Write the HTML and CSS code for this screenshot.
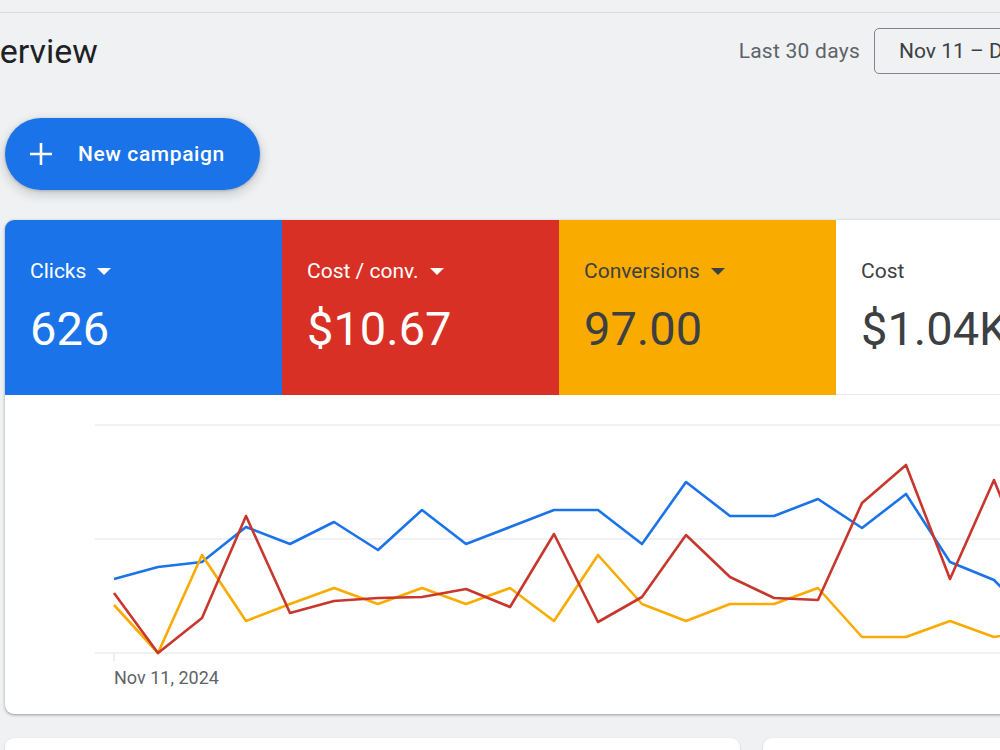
FILE: index.html
```html
<!DOCTYPE html>
<html lang="en">
<head>
<meta charset="UTF-8">
<meta name="viewport" content="width=device-width, initial-scale=1.0">
<title>Overview</title>
<link rel="stylesheet" href="styles.css">
</head>
<body>

<div class="topbar"></div>

<main class="page">
    <header class="page-head">
        <h1 class="title">Overview</h1>
        <div class="range">
            <span class="range-label">Last 30 days</span>
            <button class="date-btn">Nov 11 – Dec 10, 2024</button>
        </div>
    </header>

    <button class="new-btn">
        <svg class="plus" width="24" height="24" viewBox="0 0 24 24">
            <path d="M12 1v22M1 12h22" stroke="#fff" stroke-width="2.6" fill="none"/>
        </svg>
        New campaign
    </button>

    <section class="card">
        <div class="tiles">
            <div class="tile tile-blue">
                <div class="tile-label">Clicks <span class="caret"></span></div>
                <div class="tile-value">626</div>
            </div>
            <div class="tile tile-red">
                <div class="tile-label">Cost / conv. <span class="caret"></span></div>
                <div class="tile-value">$10.67</div>
            </div>
            <div class="tile tile-yellow">
                <div class="tile-label">Conversions <span class="caret"></span></div>
                <div class="tile-value">97.00</div>
            </div>
            <div class="tile tile-white">
                <div class="tile-label">Cost</div>
                <div class="tile-value">$1.04K</div>
            </div>
            <div class="tile-white tile-rest"></div>
        </div>

        <div class="chart">
            <svg width="1149" height="319" viewBox="5 395 1149 319">
                <g stroke="#e3e3e3" stroke-width="1.2">
                    <line x1="95" y1="425" x2="1154" y2="425"/>
                    <line x1="95" y1="539" x2="1154" y2="539"/>
                    <line x1="95" y1="653" x2="1154" y2="653"/>
                    <line x1="114" y1="653" x2="114" y2="661"/>
                </g>
                <g fill="none" stroke-width="2.6" stroke-linejoin="round">
                    <polyline stroke="#1a73e8" points="114,579 158,567 202,562 246,527 290,544 334,522 378,550 422,510 466,544 510,527 554,510 598,510 642,544 686,482 730,516 774,516 818,499 862,528 906,494 950,562 994,580 1038,625 1082,600 1126,610"/>
                    <polyline stroke="#f9ab00" points="114,605 158,653 202,555 246,621 290,604 334,588 378,604 422,588 466,604 510,588 554,621 598,555 642,604 686,621 730,604 774,604 818,588 862,637 906,637 950,621 994,637 1038,630 1082,637 1126,621"/>
                    <polyline stroke="#c8372d" points="114,593 158,653 202,618 246,516 290,613 334,601 378,598 422,597 466,589 510,607 554,534 598,622 642,597 686,535 730,577 774,598 818,600 862,503 906,465 950,579 994,480 1038,590 1082,560 1126,600"/>
                </g>
                <text class="axis-label" x="114" y="684">Nov 11, 2024</text>
            </svg>
        </div>
    </section>

    <div class="lower">
        <div class="panel panel-wide"></div>
        <div class="panel"></div>
    </div>
</main>

</body>
</html>
```

FILE: styles.css
```css
body {
    margin: 0;
    padding: 0;
    overflow: hidden;
    background: #eff1f3;
    font-family: Roboto, "Liberation Sans", sans-serif;
    color: #3c4043;
}
.topbar {
    height: 12px;
    border-bottom: 1px solid #d9dcdf;
}
.page {
    margin-left: 5px;
    width: 1149px;
}
.page-head {
    height: 76px;
    display: flex;
    align-items: center;
    justify-content: space-between;
}
.title {
    margin: 0 0 0 -45px;
    font-size: 34px;
    line-height: 40px;
    font-weight: 400;
    color: #202124;
}
.range {
    display: flex;
    align-items: center;
    gap: 14px;
}
.range-label {
    font-size: 21px;
    line-height: 24px;
    letter-spacing: 0.25px;
    color: #5f6368;
}
.date-btn {
    width: 280px;
    height: 46px;
    padding: 0 24px;
    text-align: left;
    background: transparent;
    border: 1px solid #80868b;
    border-radius: 5px;
    font-family: inherit;
    font-size: 21px;
    color: #3c4043;
}
.new-btn {
    margin-top: 29px;
    height: 72px;
    padding: 0 35px 0 24px;
    display: flex;
    align-items: center;
    gap: 25px;
    background: #1a73e8;
    color: #fff;
    border: none;
    border-radius: 36px;
    font-family: inherit;
    font-size: 21px;
    font-weight: 500;
    letter-spacing: 0.6px;
    box-shadow: 0 1px 3px rgba(60, 64, 67, 0.3), 0 4px 8px 3px rgba(60, 64, 67, 0.15);
}
.card {
    margin-top: 30px;
    background: #fff;
    border-radius: 9px;
    overflow: hidden;
    box-shadow: 0 1px 2px rgba(60, 64, 67, 0.3), 0 1px 3px 1px rgba(60, 64, 67, 0.15);
}
.tiles {
    display: flex;
}
.tile {
    flex: none;
    width: 277px;
    height: 175px;
    box-sizing: border-box;
    padding: 39px 25px 0;
}
.tile-blue { background: #1a73e8; color: #fff; }
.tile-red { background: #d93025; color: #fff; }
.tile-yellow { background: #f9ab00; color: #3c4043; }
.tile-white {
    background: #fff;
    color: #3c4043;
    border-bottom: 1px solid #e6e8ea;
}
.tile-rest {
    flex: 1;
}
.tile-label {
    font-size: 21px;
    line-height: 24px;
    display: flex;
    align-items: center;
    gap: 11px;
}
.caret {
    width: 0;
    height: 0;
    border-left: 7px solid transparent;
    border-right: 7px solid transparent;
    border-top: 7px solid currentColor;
}
.tile-value {
    margin-top: 18px;
    font-size: 47px;
    line-height: 56px;
}
.chart svg {
    display: block;
}
.axis-label {
    font-family: Roboto, "Liberation Sans", sans-serif;
    font-size: 18px;
    fill: #5f6368;
}
.lower {
    margin-top: 24px;
    display: flex;
    gap: 23px;
}
.panel {
    height: 60px;
    flex: 1;
    background: #fff;
    border-radius: 9px;
    box-shadow: 0 1px 2px rgba(60, 64, 67, 0.3);
}
.panel-wide {
    flex: none;
    width: 735px;
}
```
